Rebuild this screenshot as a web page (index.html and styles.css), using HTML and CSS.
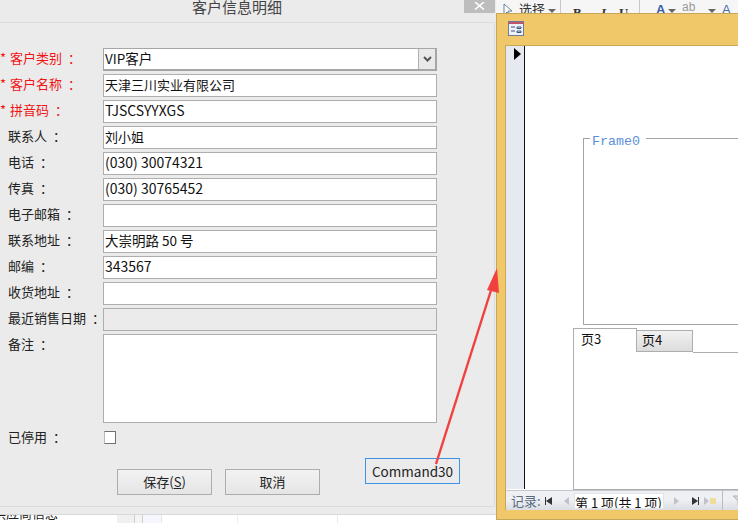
FILE: index.html
```html
<!DOCTYPE html>
<html lang="zh">
<head>
<meta charset="utf-8">
<title>客户信息明细</title>
<link rel="stylesheet" href="styles.css">
</head>
<body>
<div class="desktop">
  <div class="ribbon">
    <svg class="pointer" width="10" height="13" viewBox="0 0 10 13"><path d="M1 1v11l3-3 2 4 1-1-2-4h4z" fill="#fff" stroke="#6a7f9e"/></svg>
    <span class="rb-select">选择</span><span class="caret"></span>
    <span class="rb-sep rb-sep1"></span>
    <b class="rb-b">B</b><i class="rb-i">I</i><span class="rb-u">U</span>
    <span class="rb-sep rb-sep2"></span>
    <span class="rb-a">A</span><span class="caret caret2"></span><span class="rb-ab">ab</span><span class="caret caret3"></span><span class="rb-fill">A</span>
  </div>

  <div class="under">
    <span class="under-text">供应商信息</span>
    <span class="cell cell-a"></span><span class="cell cell-b"></span><span class="cell cell-c"></span><span class="cell cell-d"></span><span class="cell cell-e"></span>
  </div>

  <section class="dialog">
    <header class="dialog-title">客户信息明细</header>
    <button class="close" type="button"><svg width="12" height="8" viewBox="0 0 12 8"><path d="M1 0l9 7.500M10 0L1 7.500" stroke="#fff" stroke-width="1.600" fill="none"/></svg></button>
    <div class="form">
      <label class="lb req"><em>*</em>客户类别<span class="co">：</span></label>
      <div class="field select"><span class="val mix">VIP客户</span><span class="drop"><svg width="9" height="7" viewBox="0 0 9 7"><path d="M1 1l3.500 3.500L8 1" stroke="#555" stroke-width="2" fill="none"/></svg></span></div>
      <label class="lb req"><em>*</em>客户名称<span class="co">：</span></label>
      <div class="field"><span class="val cjk">天津三川实业有限公司</span></div>
      <label class="lb req"><em>*</em>拼音码<span class="co">：</span></label>
      <div class="field"><span class="val">TJSCSYYXGS</span></div>
      <label class="lb">联系人<span class="co">：</span></label>
      <div class="field"><span class="val cjk">刘小姐</span></div>
      <label class="lb">电话<span class="co">：</span></label>
      <div class="field"><span class="val">(030) 30074321</span></div>
      <label class="lb">传真<span class="co">：</span></label>
      <div class="field"><span class="val">(030) 30765452</span></div>
      <label class="lb">电子邮箱<span class="co">：</span></label>
      <div class="field"></div>
      <label class="lb">联系地址<span class="co">：</span></label>
      <div class="field"><span class="val mix">大崇明路 50 号</span></div>
      <label class="lb">邮编<span class="co">：</span></label>
      <div class="field"><span class="val">343567</span></div>
      <label class="lb">收货地址<span class="co">：</span></label>
      <div class="field"></div>
      <label class="lb">最近销售日期<span class="co">：</span></label>
      <div class="field disabled"></div>
      <label class="lb">备注<span class="co">：</span></label>
      <div class="field note"></div>
    </div>
    <div class="stop">
      <label class="lb">已停用<span class="co">：</span></label>
      <span class="check"></span>
    </div>
    <div class="actions">
      <button class="btn" type="button">保存(<u>S</u>)</button>
      <button class="btn" type="button">取消</button>
    </div>
    <button class="cmd" type="button">Command30</button>
  </section>

  <section class="access">
    <div class="access-bar">
      <svg width="17" height="16" viewBox="0 0 17 16"><rect x=".5" y=".5" width="15" height="14" fill="#eef2fa" stroke="#6c7da0"/><rect x="1" y="1" width="14" height="2" fill="#c4506a"/><path d="M3 6h4M3 10h4M9 6h4v1.500H9zM9 10h4v1.500H9z" stroke="#3e5480" fill="none"/></svg>
    </div>
    <div class="access-body">
      <div class="access-main">
        <div class="selector"><span class="rec-arrow"></span></div>
        <div class="canvas">
          <div class="frame"><span class="frame-label">Frame0</span></div>
          <div class="tabs">
            <span class="tab tab-on">页3</span>
            <span class="tab tab-off">页4</span>
          </div>
        </div>
      </div>
      <div class="nav">
        <span class="nav-label">记录:</span>
        <span class="nv nv-first"></span>
        <span class="nv nv-prev"></span>
        <span class="nav-box">第 1 项(共 1 项)</span>
        <span class="nv nv-next"></span>
        <span class="nv nv-last"></span>
        <span class="nv nv-new"></span>
        <span class="nav-sep"></span>
        <svg class="nav-filter" width="14" height="12" viewBox="0 0 14 12"><path d="M1 1h11L8 6v5L6 10V6z" fill="#d8d8d8" stroke="#b5b5b5"/></svg>
      </div>
    </div>
  </section>

  <svg class="arrow" width="70" height="210" viewBox="0 0 70 210"><path d="M1 202L58 22" stroke="#f04040" stroke-width="2.400" fill="none"/><path d="M62 6L52 28 64 31z" fill="#f04040"/></svg>
</div>
</body>
</html>
```

FILE: styles.css
```css
* { box-sizing: border-box; }
html, body { margin: 0; padding: 0; }
body { width: 738px; height: 523px; overflow: hidden; background: #fff; font-family: "Noto Sans CJK SC", "Liberation Sans", sans-serif; font-size: 13px; color: #1a1a1a; }
.desktop { position: relative; width: 738px; height: 523px; overflow: hidden; background: #fff; }

/* background windows */
.ribbon { position: absolute; left: 496px; top: 0; width: 242px; height: 13px; background: #f6f6f6; overflow: hidden; }
.ribbon > * { position: absolute; }
.pointer { left: 7px; top: 3px; }
.rb-select { left: 23px; top: 0; font-size: 13px; line-height: 18px; color: #333; }
.caret { left: 52px; top: 9px; border: 4px solid transparent; border-top-color: #666; border-bottom: 0; }
.caret2 { left: 172px; }
.caret3 { left: 212px; }
.rb-sep { top: 0; width: 1px; height: 13px; background: #c9c9c9; }
.rb-sep1 { left: 64px; }
.rb-sep2 { left: 143px; }
.rb-b, .rb-i, .rb-u { top: 5px; font: 700 13px/16px "Liberation Serif", serif; color: #333; }
.rb-b { left: 77px; }
.rb-i { left: 105px; font-style: italic; }
.rb-u { left: 123px; }
.rb-a { left: 160px; top: 3px; font: 700 13px/14px "Liberation Sans", sans-serif; color: #3a5ca8; }
.rb-ab { left: 186px; top: 0; font: 12px/14px "Liberation Sans", sans-serif; color: #999; }
.rb-fill { left: 226px; top: 3px; font: 13px/14px "Liberation Sans", sans-serif; color: #4a6aa8; }

.under { position: absolute; left: 0; top: 515px; width: 738px; height: 8px; background: #fff; overflow: hidden; }
.under > * { position: absolute; }
.under-text { left: -7px; top: -11px; font-size: 13px; line-height: 18px; }
.cell { top: 0; height: 8px; }
.cell-a { left: 117px; width: 18px; background: #f0f0f0; border-right: 1px solid #cfcfcf; }
.cell-b { left: 135px; width: 8px; background: #f4f4f4; border-right: 1px solid #cfcfcf; }
.cell-c { left: 143px; width: 19px; background: #f6f6ff; border-right: 1px solid #e8e8e8; }
.cell-d { left: 237px; width: 1px; background: #ececec; }
.cell-e { left: 337px; width: 1px; background: #ececec; }

/* customer dialog */
.dialog { position: absolute; left: 0; top: -7px; width: 496px; height: 522px; background: #ebebeb; border-bottom: 1px solid #d8d8d8; }
.dialog::after { content: ""; position: absolute; left: 0; right: 1px; top: 29px; bottom: 7px; border: 1px solid #dcdcdc; border-left: 0; pointer-events: none; }
.dialog-title { height: 29px; padding-right: 22px; text-align: center; font-size: 15px; line-height: 28px; color: #444; }
.close { position: absolute; left: 464px; top: 0; width: 31px; height: 20px; padding: 9px 0 0; border: 0; background: #bdbdbd; display: flex; justify-content: center; align-items: flex-start; }

.form { display: grid; grid-template-columns: 103px 334px; grid-auto-rows: 23px; row-gap: 3px; margin-top: 26px; position: relative; z-index: 1; }
.lb { display: block; padding-left: 8px; font-size: 13px; line-height: 19px; color: #222; white-space: nowrap; }
.req { padding-left: 0; color: #f01414; }
.req em { font-style: normal; display: inline-block; width: 10px; }
.co { padding-left: 6px; }
.field { display: flex; align-items: center; height: 23px; background: #fff; border: 1px solid #aeaeae; padding: 0 0 2px 1px; overflow: hidden; }
.val { font-size: 14px; line-height: 19px; color: #111; white-space: nowrap; }
.val.cjk { font-size: 13px; }
.val.mix { font-size: 13.500px; }
.select { border-width: 1px 2px 2px 1px; border-color: #a6a6a6; padding-bottom: 1px; }
.drop { margin-left: auto; width: 17px; height: 20px; margin-top: 1px; background: #e9e9e9; border-left: 1px solid #b0b0b0; display: flex; align-items: center; justify-content: center; }
.disabled { background: #ebebeb; }
.note { grid-row: span 4; height: 89px; }

.stop { display: grid; grid-template-columns: 104px 12px; align-items: center; margin-top: -8px; height: 20px; position: relative; z-index: 1; }
.stop .lb { line-height: 18px; }
.check { width: 12px; height: 13px; background: #fff; border: 1px solid #707070; border-left-color: #bbb; }

.actions { display: flex; gap: 13px; padding-left: 117px; margin-top: 22px; position: relative; z-index: 1; }
.btn { width: 95px; height: 26px; padding: 0; border: 1px solid #adadad; background: linear-gradient(#f2f2f2, #e5e5e5); font: 13px/22px "Noto Sans CJK SC", sans-serif; color: #222; }
.cmd { position: absolute; left: 365px; top: 465px; width: 95px; height: 26px; padding: 0; border: 1px solid #3c94e8; background: #ebebeb; font: 13.500px/22px "Noto Sans CJK SC", sans-serif; color: #222; z-index: 1; }

/* Access form window */
.access { position: absolute; left: 496px; top: 13px; width: 260px; height: 507px; background: #f0c869; border: 1px solid #c8a75a; display: flex; flex-direction: column; padding: 0 0 9px 8px; }
.access-bar { height: 31px; padding: 7px 0 0 3px; flex: none; }
.access-bar svg { display: block; }
.access-body { flex: 1; display: flex; flex-direction: column; background: #fff; border: 1px solid #c8a75a; border-right: 0; border-bottom: 0; min-height: 0; }
.access-main { flex: 1; display: flex; min-height: 0; }
.selector { width: 19px; flex: none; background: #e6e9ef; border-right: 1px solid #111; padding: 2px 0 0 8px; }
.rec-arrow { display: block; width: 0; height: 0; border: 6px solid transparent; border-left: 7px solid #000; border-right: 0; }
.canvas { flex: 1; position: relative; background: #fff; }
.frame { position: absolute; left: 58px; top: 92px; width: 300px; height: 187px; border: 1px solid #a4a4a4; border-right: 0; }
.frame-label { position: absolute; left: 6px; top: -5px; padding: 0 6px 0 2px; background: #fff; font: 13.300px/16px "Liberation Mono", monospace; color: #5a90d8; }
.tabs { position: absolute; left: 48px; top: 282px; width: 300px; height: 162px; background: #fff; border-left: 1px solid #adadad; border-bottom: 1px solid #adadad; display: flex; align-items: flex-start; }
.tab { display: block; font-size: 13px; line-height: 17px; font-family: "Noto Sans CJK SC", "Liberation Mono", sans-serif; color: #111; }
.tab-on { width: 63px; height: 24px; padding: 1px 0 0 7px; border-top: 1px solid #adadad; border-right: 1px solid #adadad; position: relative; z-index: 1; background: #fff; }
.tab-off { width: 57px; height: 22px; margin-top: 2px; margin-left: -1px; padding: 0 0 0 5px; border: 1px solid #adadad; background: linear-gradient(#f2f2f2, #dcdcdc); }
.tabs::after { content: ""; flex: 1; align-self: flex-start; height: 24px; border-bottom: 1px solid #adadad; }

.nav { flex: none; height: 20px; margin-top: 1px; border-top: 1px solid #c4c7cc; background: linear-gradient(#eef0f3 45%, #dadde2); display: flex; align-items: center; padding-left: 5px; font-size: 13px; }
.nav-label { width: 34px; color: #5a6a80; line-height: 18px; white-space: nowrap; }
.nv { display: block; position: relative; width: 0; height: 0; border: 4px solid transparent; }
.nv-first { border-right: 6px solid #333; border-left: 0; margin-left: 1px; }
.nv-first::before { content: ""; position: absolute; left: -1px; top: -4px; width: 1px; height: 8px; background: #333; }
.nv-prev { border-right: 5px solid #bfc3c9; border-left: 0; margin-left: 12px; }
.nav-box { width: 90px; height: 16px; margin-left: 5px; padding-left: 0; background: #fff; border: 1px solid #e2e4e8; font-size: 13px; line-height: 17px; color: #111; white-space: nowrap; overflow: hidden; }
.nv-next { border-left: 5px solid #bfc3c9; border-right: 0; margin-left: 10px; }
.nv-last { border-left: 6px solid #333; border-right: 0; margin-left: 13px; }
.nv-last::after { content: ""; position: absolute; left: 0; top: -4px; width: 1px; height: 8px; background: #333; }
.nv-new { border-left: 5px solid #bfc3c9; border-right: 0; margin-left: 6px; }
.nv-new::after { content: ""; position: absolute; left: 1px; top: -3px; width: 6px; height: 6px; background: #f0dc9a; }
.nav-sep { width: 1px; height: 19px; margin-left: 13px; background: #b9bcc2; }
.nav-filter { margin-left: 9px; flex: none; }

.arrow { position: absolute; left: 435px; top: 262px; z-index: 5; }
```
